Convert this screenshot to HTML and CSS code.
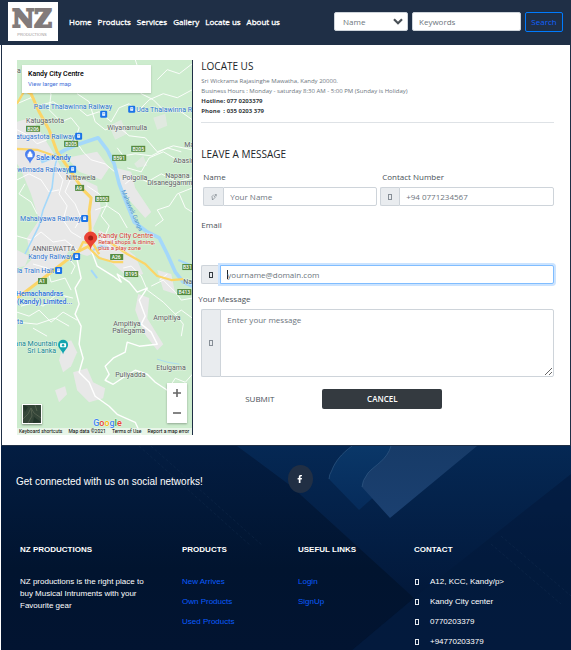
FILE: index.html
```html
<!DOCTYPE html>
<html lang="en">
<head>
<meta charset="utf-8">
<meta name="viewport" content="width=device-width, initial-scale=1">
<title>NZ Productions - Locate us</title>
<link rel="stylesheet" href="styles.css">
</head>
<body>
<header class="topbar">
  <a class="logo" href="#" aria-label="NZ Productions">
    <svg viewBox="0 0 50 39" width="50" height="39">
      <rect width="50" height="39" fill="#fff"/>
      <text class="logo-mark" x="24" y="25" text-anchor="middle">NZ</text>
      <text class="logo-name" x="24" y="34" text-anchor="middle">PRODUCTIONS</text>
    </svg>
  </a>
  <nav class="nav">
    <a href="#">Home</a>
    <a href="#">Products</a>
    <a href="#">Services</a>
    <a href="#">Gallery</a>
    <a href="#">Locate us</a>
    <a href="#">About us</a>
  </nav>
  <form class="search">
    <div class="select-wrap">
      <select class="control" aria-label="Search by"><option>Name</option></select>
      <svg class="chevron" viewBox="0 0 10 7" width="10" height="7"><path d="M1 1.2 5 5.2 9 1.2" fill="none" stroke="#495057" stroke-width="2.2"/></svg>
    </div>
    <input class="control keywords" type="text" placeholder="Keywords" aria-label="Keywords">
    <button class="search-btn" type="button">Search</button>
  </form>
</header>

<main class="page">
  <section class="map" aria-label="Map">
    <svg class="map-art" viewBox="0 0 175 375" preserveAspectRatio="xMidYMid slice">
      <rect width="175" height="375" fill="#cdecce"/>
      <g fill="#e8e8e8">
        <path d="M0 62 14 58 22 70 38 96 46 112 62 118 80 126 84 150 76 168 84 190 70 196 52 190 44 206 22 222 0 240 0 214 14 200 10 178 22 160 14 134 4 110 0 104Z"/>
        <path d="M50 98 80 92 92 108 84 120 62 112Z"/>
        <path d="M98 108 114 112 118 128 134 152 128 158 112 140 102 124Z"/>
        <path d="M82 170 96 178 118 196 126 214 112 218 96 204 78 194Z"/>
        <path d="M121 234 132 238 130 258 146 284 140 290 126 272 118 250Z"/>
        <path d="M46 284 54 280 60 292 54 306 46 312 42 300Z"/>
        <path d="M56 312 70 308 76 322 88 328 86 338 72 342 60 330Z"/>
        <path d="M38 330 48 326 50 334 42 342Z"/>
        <path d="M0 190 12 196 8 206 0 208ZM140 210 154 214 158 234 146 230Z"/>
        <path d="M117 104 126 96 130 106 120 108ZM92 66 104 60 110 74 98 80ZM136 58 148 54 150 66 140 70Z" opacity=".7"/>
      </g>
      <g fill="none" stroke="#fff" stroke-width=".9" stroke-linejoin="round">
        <path d="M0 44 14 38 22 46 36 42 48 50 58 46 70 56 82 52 94 62 102 48 112 44 120 52 132 40 146 34 160 38 175 30"/>
        <path d="M118 0 122 12 116 22 124 34 136 40 148 52 158 48 175 60"/>
        <path d="M140 20 150 10 162 14 175 4M60 34 72 42 78 62 88 70 100 66 112 76 128 78 140 92 156 86 175 90"/>
        <path d="M24 26 34 34 32 50 44 62 54 58 62 68 58 80 66 92 74 100 88 104 100 114"/>
        <path d="M110 108 124 112 132 98 146 92 160 100M108 124 118 116 130 122 144 114 160 122 175 118"/>
        <path d="M175 128 160 134 152 146 140 150 146 160 138 166M162 134 168 148 175 152"/>
        <path d="M100 88 106 96 118 94 134 96 150 88 164 92"/>
        <path d="M0 70 12 76 20 84 30 80M0 120 12 114 24 120 32 132 42 130M8 124 2 134 14 142 20 154"/>
        <path d="M40 96 38 108 46 120 42 134 50 146 46 160 54 172 64 178M54 118 48 132 58 144 64 158 58 168"/>
        <path d="M70 126 82 134 90 144 84 156 92 166 86 180 96 190M78 150 90 146 102 154 110 168"/>
        <path d="M0 176 14 180 24 172 36 182 48 180 60 190M16 204 30 208 34 222 48 218 54 230M50 196 58 206 54 214"/>
        <path d="M60 200 64 218 58 228 62 244 58 254 64 266 62 284 66 298 62 312 72 322 78 336 92 346 100 354 118 362 124 375" stroke-width="1.4"/>
        <path d="M74 190 80 206 96 216 104 222 100 214 112 222 120 232 130 228 122 240 128 256 124 264 134 272 140 284 122 286 110 282 108 292 96 298 88 306 92 314 88 320 96 324 108 316 118 310 130 314 138 322 150 330" stroke-width="1.4"/>
        <path d="M106 208 114 206 124 216 130 230 146 242 158 254 166 264 164 276"/>
        <path d="M134 226 146 220 158 232 164 240 175 238M158 254 164 250 175 258M150 330 158 318 168 322 175 314"/>
        <path d="M0 252 12 256 22 250 34 262 46 252 60 260M4 246 18 242 26 246 40 234 56 238"/>
        <path d="M0 262 20 264 38 258 52 266M16 268 30 276M142 220 150 214"/>
      </g>
      <g fill="none" stroke="#a4d8fa" stroke-linejoin="round">
        <path d="M41 94 37 110 35 128 26 150 22 166 14 182 8 194" stroke-width="1.6"/>
        <path d="M24 102 34 98 48 90 60 85 81 78 90 90 97 104 102 124 108 140 117 162 130 172 142 178 150 194 158 212 166 222 175 226" stroke-width="3.6"/>
        <path d="M76 190 84 186 92 188M74 210 80 218M161 200 175 206" stroke-width="2"/>
        <path d="M140 299 150 302 162 304" stroke-width=".8"/>
      </g>
      <g fill="none" stroke="#fbd568" stroke-linejoin="round">
        <path d="M6 30 14 34 22 52 32 70 40 92 54 112 66 130 74 138 72 152 73 168 72 186 60 192 42 206 24 220 0 238" stroke-width="3"/>
        <path d="M0 89 20 90 40 97M70 186 82 198 96 202 106 202M92 182 110 194 128 204 140 216 154 220 166 219M0 44 8 30" stroke-width="2.2"/>
        <path d="M60 194 66 182 76 184 82 194" stroke-width="2.4"/>
      </g>
      <g class="shields">
        <g fill="#558b3f"><rect x="9" y="66" width="14" height="6"/><rect x="47" y="81" width="14" height="6"/><rect x="114" y="86" width="14" height="6"/><rect x="95" y="95" width="14" height="6"/><rect x="58" y="125" width="9" height="6"/><rect x="78" y="136" width="14" height="6"/><rect x="93" y="194" width="13" height="6"/><rect x="107" y="211" width="14" height="6"/><rect x="21" y="218" width="9" height="6"/><rect x="165" y="204" width="14" height="6"/><rect x="160" y="229" width="14" height="6"/></g>
        <text x="16" y="71">B206</text><text x="54" y="86">B205</text><text x="121" y="91">B205</text><text x="102" y="100">B591</text><text x="62" y="130">A9</text><text x="85" y="141">B550</text><text x="99" y="199">A26</text><text x="114" y="216">B195</text><text x="25" y="223">A1</text><text x="170" y="209">B31</text><text x="167" y="234">B413</text>
      </g>
      <g class="place">
        <text x="9" y="63">Katugastota</text><text x="90" y="70">Wiyanamulla</text><text x="167" y="87">Ma</text><text x="156" y="103">Abasin</text><text x="49" y="120">Nittawela</text><text x="105" y="120">Polgolla</text><text x="148" y="118">Napana</text><text x="130" y="125">Disaneggamme</text><text x="15" y="191">ANNIEWATTA</text><text x="166" y="224">Nat</text><text x="136" y="260">Ampitiya</text><text x="96" y="266">Ampitiya</text><text x="95" y="273">Pallegama</text><text x="139" y="310">Etulgama</text><text x="98" y="317">Puliyadda</text><text x="0" y="13">a</text>
      </g>
      <g class="transit">
        <text x="95" y="49" text-anchor="end">Palle Thalawinna Railway</text><text x="119" y="52">Uda Thalawinna Rai</text><text x="58" y="79" text-anchor="end">Katugastota Railway</text><text x="52" y="112" text-anchor="end">Pawilmada Railway</text><text x="64" y="161" text-anchor="end">Mahaiyawa Railway</text><text x="56" y="199" text-anchor="end">Kandy Railway</text><text x="37" y="213" text-anchor="end">Gola Train Halt</text><text x="0" y="264">ta</text>
        <text class="river" transform="translate(104 131) rotate(66)">Mahaweli Ganga</text>
      </g>
      <g class="business"><text x="19" y="100">Sale Kandy</text><text x="-1" y="236">Hemachandras</text><text x="0" y="244">(Kandy) Limited...</text></g>
      <g class="sight"><text x="40" y="286" text-anchor="end">Bana Mountain</text><text x="39" y="293" text-anchor="end">Sri Lanka</text></g>
      <g class="target"><text class="target-name" x="81" y="178">Kandy City Centre</text><text x="81" y="184">Retail shops &amp; dining,</text><text x="81" y="190">plus a play zone</text></g>
      <defs>
        <g id="station"><rect width="7" height="7" rx="1.2" fill="#1a73e8"/><rect x="2" y="1.5" width="3" height="3.5" rx=".5" fill="#fff"/><path d="M2.4 3h2.2" stroke="#1a73e8" stroke-width=".6"/></g>
      </defs>
      <use href="#station" x="83" y="51"/><use href="#station" x="111" y="46"/><use href="#station" x="58" y="73"/><use href="#station" x="52" y="106"/><use href="#station" x="64" y="155"/><use href="#station" x="56" y="193"/><use href="#station" x="38" y="207"/>
      <path d="M13 104C12 100 8 98 8 94.500a5 5 0 0 1 10 0C18 98 14 100 13 104Z" fill="#4a80f0"/><path d="M10.800 94h4.400v3.200h-4.400zM11.800 94v-1a1.200 1.200 0 0 1 2.400 0v1" fill="#fff" stroke="#fff" stroke-width=".4"/>
      <path d="M46 294C45 290 41 288 41 284.500a5 5 0 0 1 10 0C51 288 47 290 46 294Z" fill="#12a4af"/><rect x="43" y="283" width="6" height="4" rx=".7" fill="#fff"/><circle cx="46" cy="285" r="1.200" fill="#12a4af"/>
      <path d="M73.500 190C73 184 67 182 67 178a6.500 6.500 0 0 1 13 0C80 182 74 184 73.500 190Z" fill="#ea4335"/><circle cx="73.500" cy="178" r="2.500" fill="#a51d14"/>
      <g class="google"><text x="76" y="366"><tspan fill="#4285f4">G</tspan><tspan fill="#ea4335">o</tspan><tspan fill="#fbbc05">o</tspan><tspan fill="#4285f4">g</tspan><tspan fill="#34a853">l</tspan><tspan fill="#ea4335">e</tspan></text></g>
    </svg>
    <div class="map-card">
      <strong>Kandy City Centre</strong>
      <a href="#">View larger map</a>
    </div>
    <button class="satellite" type="button" aria-label="Satellite imagery">
      <svg viewBox="0 0 18 18" width="18" height="18"><rect width="18" height="18" fill="#344538"/><path d="M0 14 5 9 8 3 11 8 18 13M8 3 9 11 5 18M12 0 14 6" fill="none" stroke="#53604f"/><path d="M0 0 5 2 2 7ZM11 12 18 17 10 18Z" fill="#22352a"/></svg>
    </button>
    <div class="zoom">
      <button type="button" aria-label="Zoom in"><svg viewBox="0 0 10 10" width="10" height="10"><path d="M5 1v8M1 5h8" stroke="#666" stroke-width="1.600"/></svg></button>
      <button type="button" aria-label="Zoom out"><svg viewBox="0 0 10 10" width="10" height="10"><path d="M1 5h8" stroke="#666" stroke-width="1.600"/></svg></button>
    </div>
    <div class="map-legal"><a href="#">Keyboard shortcuts</a><span>Map data ©2021</span><a href="#">Terms of Use</a><a href="#">Report a map error</a></div>
  </section>

  <section class="contact">
    <h1>LOCATE US</h1>
    <div class="details">
      <p>Sri Wickrama Rajasinghe Mawatha, Kandy 20000.</p>
      <p>Business Hours : Monday - saturday 8:30 AM - 5:00 PM (Sunday is Holiday)</p>
      <p class="phone">Hotline: 077 0203379</p>
      <p class="phone">Phone &nbsp;: 035 0203 379</p>
    </div>
    <hr>
    <h2>LEAVE A MESSAGE</h2>
    <form class="message-form">
      <div class="row">
        <div class="field">
          <label for="name">Name</label>
          <div class="group">
            <span class="addon wide"><svg viewBox="0 0 8 8" width="8" height="8" fill="none" stroke="#7a828a" stroke-width=".7"><path d="M2 3.500 4 1.500M2 3.500 2.500 7 6 3.500M4 4 6.500 1M5 1.500 7 2.500"/></svg></span>
            <input class="control" id="name" type="text" placeholder="Your Name">
          </div>
        </div>
        <div class="field">
          <label for="phone">Contact Number</label>
          <div class="group">
            <span class="addon"><i class="box"></i></span>
            <input class="control" id="phone" type="tel" placeholder="+94 0771234567">
          </div>
        </div>
      </div>
      <label class="email-label" for="email">Email</label>
      <div class="group email-group">
        <span class="addon"><i class="box dark"></i></span>
        <input class="control active" id="email" type="email" placeholder="yourname@domain.com">
      </div>
      <label class="message-label" for="message">Your Message</label>
      <div class="group">
        <span class="addon"><i class="box"></i></span>
        <textarea class="control" id="message" placeholder="Enter your message"></textarea>
      </div>
      <div class="actions">
        <button class="submit" type="button">SUBMIT</button>
        <button class="cancel" type="reset">CANCEL</button>
      </div>
    </form>
  </section>
</main>

<footer class="footer">
  <svg class="footer-art" viewBox="0 0 570 205" preserveAspectRatio="xMidYMin slice" aria-hidden="true">
    <defs>
      <linearGradient id="base" x2="0" y2="1"><stop stop-color="#031d42"/><stop offset=".6" stop-color="#01142f"/><stop offset="1" stop-color="#021431"/></linearGradient>
      <linearGradient id="band" x2="0" y2="1"><stop stop-color="#052854"/><stop offset="1" stop-color="#02183a"/></linearGradient>
      <linearGradient id="left" x2="0" y2="1"><stop stop-color="#0a3768"/><stop offset="1" stop-color="#062b5a"/></linearGradient>
      <linearGradient id="right" x2="0" y2="1"><stop stop-color="#173b68"/><stop offset="1" stop-color="#1b4070"/></linearGradient>
    </defs>
    <rect width="570" height="205" fill="url(#base)"/>
    <path d="M500 0H570V205H350L413 152Z" fill="#03204a" opacity=".5"/>
    <path d="M236 0H570V28L413 152 290 40Z" fill="url(#band)"/>
    <path d="M351 0C340 8 334 16 331 24Q328 29 328 33L358 64 430 0Z" fill="url(#left)"/>
    <path d="M390 0C386 14 374 19 367 27Q361 35 361 41L389 72 476 0Z" fill="url(#right)"/>
    <path d="M351 0C340 8 334 16 331 24Q328 29 328 33M390 0C386 14 374 19 367 27Q361 35 361 41" fill="none" stroke="#345c86" stroke-width=".6"/>
    <path d="M138 0 250 100M150 0 262 100M500 90 570 150M490 98 560 158" stroke="#234061" stroke-width=".6" stroke-dasharray="3 2" opacity=".4"/>
  </svg>
  <div class="social">
    <p>Get connected with us on social networks!</p>
    <a class="facebook" href="#" aria-label="Facebook"><svg viewBox="0 0 6 10" width="6" height="8"><path d="M1.500 10V5.500H0V3.700h1.500V2.400C1.500.8 2.400 0 3.900 0h1.600v1.700H4.400c-.6 0-.8.300-.8.800v1.200h1.900l-.3 1.800H3.600V10Z" fill="#fff"/></svg></a>
  </div>
  <div class="columns">
    <section>
      <h3>NZ PRODUCTIONS</h3>
      <p class="about">NZ productions is the right place to buy Musical Intruments with your Favourite gear</p>
    </section>
    <section>
      <h3>PRODUCTS</h3>
      <ul><li><a href="#">New Arrives</a></li><li><a href="#">Own Products</a></li><li><a href="#">Used Products</a></li></ul>
    </section>
    <section>
      <h3>USEFUL LINKS</h3>
      <ul><li><a href="#">Login</a></li><li><a href="#">SignUp</a></li></ul>
    </section>
    <section>
      <h3>CONTACT</h3>
      <ul class="reach"><li><i class="box light"></i>A12, KCC, Kandy/p&gt;</li><li><i class="box light"></i>Kandy City center</li><li><i class="box light"></i>0770203379</li><li><i class="box light"></i>+94770203379</li></ul>
    </section>
  </div>
</footer>
</body>
</html>
```
FILE: styles.css
```css
* { box-sizing: border-box; }
html { background: #fff; }
body {
  margin: 0;
  font: 8px/12px "Open Sans", "Noto Sans", sans-serif;
  color: #495057;
  overflow-x: hidden;
}
h1, h2, h3, p, ul { margin: 0; padding: 0; font-weight: 400; }
ul { list-style: none; }
a { text-decoration: none; }
button { padding: 0; font: inherit; }

.topbar {
  display: flex;
  align-items: center;
  height: 45px;
  padding: 0 8px 2px;
  background: #1f2f46;
}
.logo, .logo svg { display: block; }
.logo-mark {
  font: 700 24px "DejaVu Serif", serif;
  fill: #827b7b;
  stroke: #827b7b;
  stroke-width: 2;
}
.logo-name { font: 4px "Liberation Sans", sans-serif; fill: #9b9696; }
.nav { display: flex; gap: 6px; margin-left: 11px; white-space: nowrap; }
.nav a { color: #fff; -webkit-text-stroke: .3px #fff; }
.search { display: flex; gap: 4px; margin-left: auto; padding-top: 1px; }
.select-wrap { position: relative; width: 74px; }
.chevron { position: absolute; right: 5px; top: 6px; pointer-events: none; }
.control {
  display: block;
  width: 100%;
  min-width: 0;
  height: 19px;
  margin: 0;
  padding: 0 6px;
  border: 1px solid #ced4da;
  border-radius: 2px;
  background: #fff;
  color: #6c757d;
  font: inherit;
  outline: none;
}
.control::placeholder { color: #6c757d; opacity: 1; }
select.control { appearance: none; padding-left: 8px; }
.keywords { width: 109px; }
.search-btn {
  width: 38px;
  height: 20px;
  border: 1px solid #007bff;
  border-radius: 2px;
  background: none;
  color: #0f62fe;
}

.page {
  display: grid;
  grid-template-columns: 1fr 2fr;
  gap: 8px;
  margin-left: 1px;
  padding: 15px 16px 10px 15px;
  border: 1px solid #1f2f46;
  border-top: 0;
}
.map {
  position: relative;
  min-height: 375px;
  overflow: hidden;
  border-right: 1px solid #1f2f46;
}
.map-art {
  position: absolute;
  width: 100%;
  height: 100%;
  font: 7px Roboto, sans-serif;
}
.map-art text { paint-order: stroke; stroke: #fff; stroke-width: 1px; stroke-opacity: .5; }
.place { fill: #5c6062; }
.transit { fill: #2f74d0; }
.map-art .river { font-size: 6px; fill: #4f93cf; stroke: none; }
.business { font-weight: 500; fill: #2a6fdc; }
.sight { fill: #128692; }
.target { font-size: 6px; fill: #d23a31; }
.target-name { font-size: 7px; }
.map-art .shields text { font-size: 5px; font-weight: 500; text-anchor: middle; fill: #fff; stroke: none; }
.google { font: 500 9px Roboto, sans-serif; }
.map-card {
  position: absolute;
  top: 5px;
  left: 5px;
  width: 129px;
  height: 28px;
  padding: 5px 6px;
  background: #fff;
  box-shadow: 0 1px 2px rgba(0, 0, 0, .2);
  font: 6px/9px Roboto, sans-serif;
}
.map-card strong { display: block; font-size: 7px; font-weight: 500; color: #000; }
.map-card a { color: #3f6fd8; }
.satellite {
  position: absolute;
  left: 5px;
  bottom: 11px;
  border: 1px solid #fff;
  box-shadow: 0 1px 2px rgba(0, 0, 0, .4);
}
.satellite svg { display: block; }
.zoom {
  position: absolute;
  right: 5px;
  bottom: 12px;
  display: grid;
  width: 20px;
  height: 40px;
  background: #fff;
  box-shadow: 0 1px 2px rgba(0, 0, 0, .3);
}
.zoom button { display: grid; place-items: center; border: 0; background: none; }
.map-legal {
  position: absolute;
  left: 0;
  right: 0;
  bottom: 0;
  display: flex;
  justify-content: space-between;
  padding: 0 3px 0 2px;
  background: rgba(240, 248, 240, .75);
  font: 5px/7px Roboto, sans-serif;
  color: #000;
  white-space: nowrap;
}
.map-legal a { color: #000; }

h1, h2 { font-size: 10px; line-height: 12px; color: #212529; }
.details { padding-top: 4px; font-size: 6px; line-height: 10px; }
.details p { color: #6c757d; }
.details .phone { color: #343a40; font-weight: 700; }
.contact hr { height: 1px; margin: 6px 0 25px; border: 0; background: #dee2e6; }
label { display: block; }
.message-form { padding-top: 11px; }
.row { display: grid; grid-template-columns: 1fr 1fr; gap: 3px; padding-left: 2px; }
.row label { margin-bottom: 4px; }
.row .field + .field label { padding-left: 2px; }
.group { display: flex; }
.addon {
  display: flex;
  flex: none;
  align-items: center;
  justify-content: center;
  width: 19px;
  border: 1px solid #ced4da;
  border-right: 0;
  border-radius: 2px 0 0 2px;
  background: #e9ecef;
}
.addon.wide { width: 20px; }
.group .control { border-radius: 0 2px 2px 0; }
.box { width: 4px; height: 6px; border: 1px solid #868e96; }
.box.dark { border-color: #343a40; }
.box.light { border-color: #e4e8ee; }
.email-label { margin: 13px 0 34px; }
.group .active {
  border-color: #80bdff;
  box-shadow: 0 0 0 2px #cce4ff;
  background: linear-gradient(#212529, #212529) 6px center / 1px 9px no-repeat #fff;
}
.message-label { margin: 9px 0 4px -3px; }
textarea.control { height: 68px; padding-top: 4px; resize: vertical; }
.actions { display: flex; align-items: center; gap: 4px; margin-top: 12px; }
.actions button { width: 120px; height: 20px; border: 0; border-radius: 2px; }
.submit { background: none; color: #495057; }
.actions .submit { width: 117px; }
.cancel { background: #343a40; color: #fff; font-weight: 600; }

.footer {
  position: relative;
  min-height: 205px;
  margin-left: 1px;
  overflow: hidden;
  background: #021431;
  color: #fff;
  font: 8px/12px "Liberation Sans", Arial, sans-serif;
}
.footer-art { position: absolute; width: 100%; height: 100%; }
.social, .columns { position: relative; display: grid; }
.social { grid-template-columns: 1fr 1fr; align-items: center; padding: 19px 12px 0 15px; }
.social p { padding-top: 6px; font-size: 10px; }
.facebook {
  display: grid;
  place-items: center;
  width: 25px;
  height: 28px;
  border-radius: 50%;
  background: #212f44;
}
.columns { grid-template-columns: 162fr 116fr 116fr 157fr; padding: 51px 0 2px 19px; }
.columns h3 { margin-bottom: 20px; font-size: 8px; font-weight: 700; }
.about { width: 130px; }
.columns li { display: flex; align-items: center; margin-bottom: 8px; }
.columns li:last-child { margin-bottom: 0; }
.columns a { color: #0a5cff; }
.reach .box { margin: 0 11px 0 1px; }
```
